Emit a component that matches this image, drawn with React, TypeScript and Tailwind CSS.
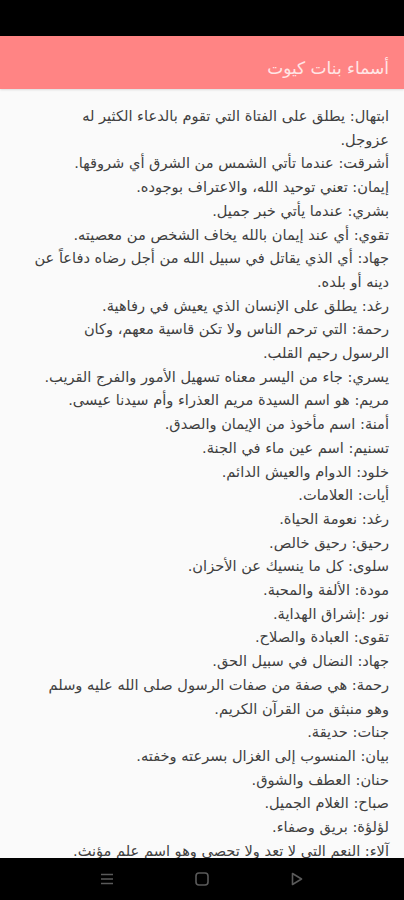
import React from 'react';

const lines = [
  'ابتهال: يطلق على الفتاة التي تقوم بالدعاء الكثير له',
  'عزوجل.',
  'أشرقت: عندما تأتي الشمس من الشرق أي شروقها.',
  'إيمان: تعني توحيد الله، والاعتراف بوجوده.',
  'بشري: عندما يأتي خبر جميل.',
  'تقوي: أي عند إيمان بالله يخاف الشخص من معصيته.',
  'جهاد: أي الذي يقاتل في سبيل الله من أجل رضاه دفاعاً عن',
  'دينه أو بلده.',
  'رغد: يطلق على الإنسان الذي يعيش في رفاهية.',
  'رحمة: التي ترحم الناس ولا تكن قاسية معهم، وكان',
  'الرسول رحيم القلب.',
  'يسري: جاء من اليسر معناه تسهيل الأمور والفرج القريب.',
  'مريم: هو اسم السيدة مريم العذراء وأم سيدنا عيسى.',
  'أمنة: اسم مأخوذ من الإيمان والصدق.',
  'تسنيم: اسم عين ماء في الجنة.',
  'خلود: الدوام والعيش الدائم.',
  'أيات: العلامات.',
  'رغد: نعومة الحياة.',
  'رحيق: رحيق خالص.',
  'سلوى: كل ما ينسيك عن الأحزان.',
  'مودة: الألفة والمحبة.',
  'نور :إشراق الهداية.',
  'تقوى: العبادة والصلاح.',
  'جهاد: النضال في سبيل الحق.',
  'رحمة: هي صفة من صفات الرسول صلى الله عليه وسلم',
  'وهو منبثق من القرآن الكريم.',
  'جنات: حديقة.',
  'بيان: المنسوب إلى الغزال بسرعته وخفته.',
  'حنان: العطف والشوق.',
  'صباح: الغلام الجميل.',
  'لؤلؤة: بريق وصفاء.',
  'آلاء: النعم التي لا تعد ولا تحصي وهو اسم علم مؤنث.',
];

const App: React.FC = () => {
  return (
    <div
      className="w-[404px] h-[900px] flex flex-col overflow-hidden bg-[#fafafa]"
      style={{ fontFamily: '"DejaVu Sans", sans-serif' }}
    >
      {/* Status bar */}
      <div className="h-[36px] bg-black shrink-0" />

      {/* Toolbar */}
      <div className="h-[53px] shrink-0 bg-[#ff8484] flex items-center justify-start px-[15px] pt-[12px] shadow-[0_1px_2px_rgba(0,0,0,0.12)]" dir="rtl">
        <span className="text-[17px] text-[#ffe6e6] leading-none">أسماء بنات كيوت</span>
      </div>

      {/* Names list */}
      <div className="flex-1 overflow-hidden px-[15px] pt-[15px]" dir="rtl">
        {lines.map((line, i) => (
          <div key={i} className="text-[14.6px] leading-[23.7px] text-[#404040] whitespace-nowrap text-right">
            {line}
          </div>
        ))}
      </div>

      {/* Navigation bar */}
      <div className="h-[42px] shrink-0 bg-black flex items-center justify-center gap-[80px]">
        <svg width="14" height="14" viewBox="0 0 14 14" className="text-[#5a5a5a]">
          <path d="M1 2.5h12M1 7h12M1 11.5h12" stroke="currentColor" strokeWidth="1.5" />
        </svg>
        <svg width="16" height="16" viewBox="0 0 16 16" className="text-[#5a5a5a]">
          <rect x="2" y="2" width="12" height="12" rx="3" fill="none" stroke="currentColor" strokeWidth="1.6" />
        </svg>
        <svg width="14" height="16" viewBox="0 0 14 16" className="text-[#5a5a5a]">
          <path d="M2.5 2.5L11.5 8L2.5 13.5Z" fill="none" stroke="currentColor" strokeWidth="1.6" strokeLinejoin="round" />
        </svg>
      </div>
    </div>
  );
};

export default App;
